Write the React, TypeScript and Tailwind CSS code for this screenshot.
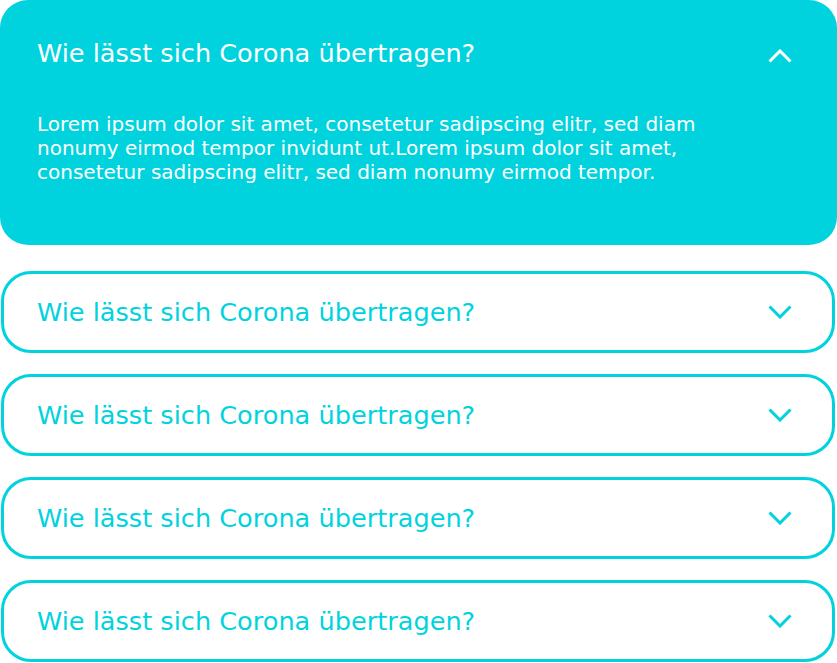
import { useState } from "react";

const questions = [
  "Wie lässt sich Corona übertragen?",
  "Wie lässt sich Corona übertragen?",
  "Wie lässt sich Corona übertragen?",
  "Wie lässt sich Corona übertragen?",
  "Wie lässt sich Corona übertragen?",
];

const answer =
  "Lorem ipsum dolor sit amet, consetetur sadipscing elitr, sed diam nonumy eirmod tempor invidunt ut.Lorem ipsum dolor sit amet, consetetur sadipscing elitr, sed diam nonumy eirmod tempor.";

function Chevron({ up }: { up?: boolean }) {
  return (
    <svg width="24" height="14" viewBox="0 0 24 14" fill="none" className="shrink-0">
      <polyline
        points={up ? "1.5,12.5 12,2 22.5,12.5" : "1.5,1.5 12,12 22.5,1.5"}
        stroke="currentColor"
        strokeWidth="3"
      />
    </svg>
  );
}

export default function App() {
  const [open, setOpen] = useState(0);

  return (
    <div
      className="w-[837px] h-[663px] bg-white flex flex-col"
      style={{ fontFamily: '"DejaVu Sans", sans-serif' }}
    >
      {questions.map((q, i) =>
        i === open ? (
          <div key={i} className="rounded-[28px] bg-[#00d3de] text-white px-[37px] pt-[37px] pb-[61px] mb-[5px]">
            <button
              type="button"
              onClick={() => setOpen(-1)}
              className="w-full flex items-center justify-between text-left"
            >
              <span className="text-[25.6px] leading-[32px]">{q}</span>
              <span className="mr-[8px] mt-[5px]">
                <Chevron up />
              </span>
            </button>
            <p className="mt-[43px] max-w-[720px] text-[20px] leading-[24px]">{answer}</p>
          </div>
        ) : (
          <button
            key={i}
            type="button"
            onClick={() => setOpen(i)}
            className="ml-[1px] mr-[2px] mt-[21px] first:mt-0 h-[82px] shrink-0 rounded-[30px] border-[3px] border-[#00d3de] text-[#00d3de] px-[33px] flex items-center justify-between text-left"
          >
            <span className="text-[25.6px] leading-[32px]">{q}</span>
            <span className="mr-[7px]">
              <Chevron />
            </span>
          </button>
        )
      )}
    </div>
  );
}
